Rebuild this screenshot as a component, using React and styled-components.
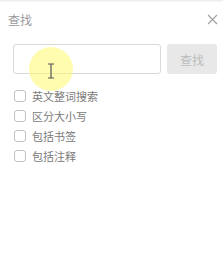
import React from 'react';
import styled, { createGlobalStyle } from 'styled-components';

const Global = createGlobalStyle`
  html, body {
    margin: 0;
    padding: 0;
    background: #ffffff;
    font-family: "Noto Sans CJK SC", "Noto Sans", sans-serif;
  }
`;

const Panel = styled.div`
  position: relative;
  width: 223px;
  height: 271px;
  box-sizing: border-box;
  background: #ffffff;
  border-top: 1px solid #eeeeee;
  box-shadow: inset 0 2px 2px -1px rgba(0, 0, 0, 0.04);
  overflow: hidden;
`;

const Header = styled.div`
  display: flex;
  align-items: center;
  justify-content: space-between;
  height: 36px;
  padding: 0 4px 0 8px;
`;

const Title = styled.div`
  font-size: 12px;
  color: #9a9a9a;
`;

const Close = styled.button`
  border: 0;
  background: none;
  padding: 0;
  width: 14px;
  height: 14px;
  display: flex;
  align-items: center;
  justify-content: center;
  svg { display: block; }
`;

const SearchRow = styled.div`
  display: flex;
  gap: 6px;
  padding: 7px 6px 0 13px;
`;

const Input = styled.div`
  flex: 1;
  height: 30px;
  box-sizing: border-box;
  border: 1px solid #d9d9d9;
  border-radius: 3px;
`;

const Button = styled.div`
  width: 50px;
  height: 30px;
  border-radius: 3px;
  background: #e8e8e8;
  color: #bcbcbc;
  font-size: 12px;
  display: flex;
  align-items: center;
  justify-content: center;
`;

const Options = styled.div`
  display: flex;
  flex-direction: column;
  gap: 8px;
  padding: 16px 0 0 14px;
`;

const Option = styled.label`
  display: flex;
  align-items: center;
  gap: 6px;
  height: 12px;
  font-size: 11px;
  color: #7a7a7a;
`;

const Box = styled.span`
  width: 12px;
  height: 12px;
  box-sizing: border-box;
  border: 1px solid #c2c2c2;
  border-radius: 3px;
`;

const Highlight = styled.div`
  position: absolute;
  left: 29px;
  top: 46px;
  width: 44px;
  height: 44px;
  border-radius: 50%;
  background: rgba(255, 250, 110, 0.55);
  display: flex;
  align-items: center;
  justify-content: center;
`;

const options = ['英文整词搜索', '区分大小写', '包括书签', '包括注释'];

export default function App() {
  return (
    <>
      <Global />
      <Panel>
        <Header>
          <Title>查找</Title>
          <Close>
            <svg width="11" height="11" viewBox="0 0 11 11">
              <path d="M1 1L10 10M10 1L1 10" stroke="#9e9e9e" strokeWidth="1.1" />
            </svg>
          </Close>
        </Header>
        <SearchRow>
          <Input />
          <Button>查找</Button>
        </SearchRow>
        <Options>
          {options.map((o) => (
            <Option key={o}>
              <Box />
              {o}
            </Option>
          ))}
        </Options>
        <Highlight>
          <svg width="8" height="16" viewBox="0 0 8 16" style={{ marginTop: 4 }}>
            <path d="M1 1H7M4 1V15M1 15H7" stroke="#555" strokeWidth="1.2" fill="none" />
          </svg>
        </Highlight>
      </Panel>
    </>
  );
}
